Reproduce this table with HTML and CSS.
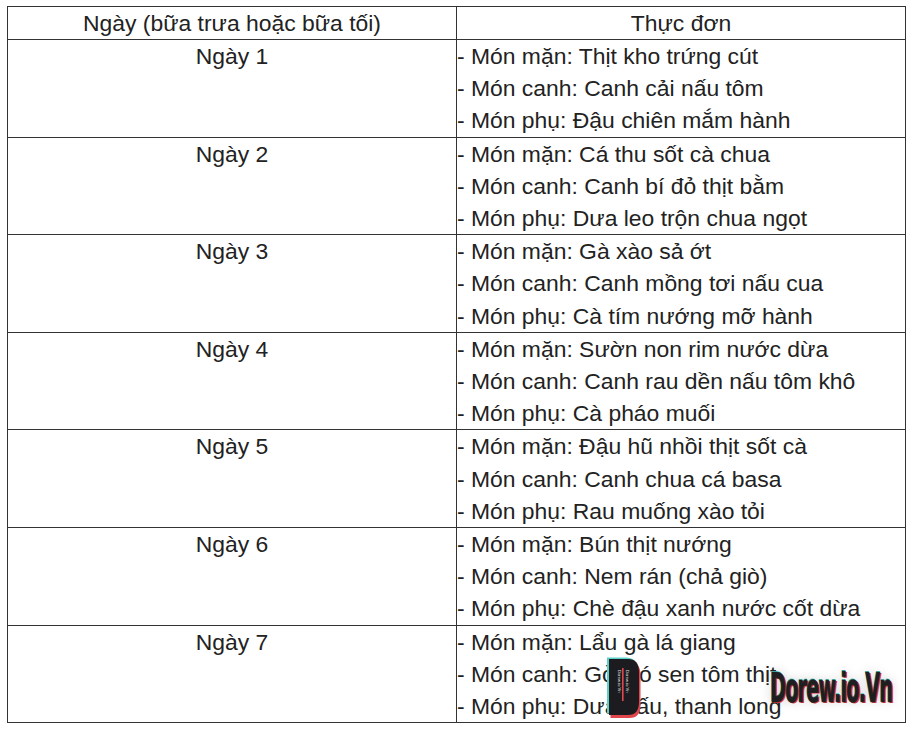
FILE: index.html
```html
<!DOCTYPE html>
<html lang="vi">
<head>
<meta charset="utf-8">
<title>Thực đơn</title>
<link rel="stylesheet" href="styles.css">
</head>
<body>
<div class="wrap">
<table class="menu">
  <thead>
    <tr><th>Ngày (bữa trưa hoặc bữa tối)</th><th>Thực đơn</th></tr>
  </thead>
  <tbody>
    <tr><td class="day">Ngày 1</td><td class="dish">- Món mặn: Thịt kho trứng cút<br>- Món canh: Canh cải nấu tôm<br>- Món phụ: Đậu chiên mắm hành</td></tr>
    <tr><td class="day">Ngày 2</td><td class="dish">- Món mặn: Cá thu sốt cà chua<br>- Món canh: Canh bí đỏ thịt bằm<br>- Món phụ: Dưa leo trộn chua ngọt</td></tr>
    <tr><td class="day">Ngày 3</td><td class="dish">- Món mặn: Gà xào sả ớt<br>- Món canh: Canh mồng tơi nấu cua<br>- Món phụ: Cà tím nướng mỡ hành</td></tr>
    <tr><td class="day">Ngày 4</td><td class="dish">- Món mặn: Sườn non rim nước dừa<br>- Món canh: Canh rau dền nấu tôm khô<br>- Món phụ: Cà pháo muối</td></tr>
    <tr><td class="day">Ngày 5</td><td class="dish">- Món mặn: Đậu hũ nhồi thịt sốt cà<br>- Món canh: Canh chua cá basa<br>- Món phụ: Rau muống xào tỏi</td></tr>
    <tr><td class="day">Ngày 6</td><td class="dish">- Món mặn: Bún thịt nướng<br>- Món canh: Nem rán (chả giò)<br>- Món phụ: Chè đậu xanh nước cốt dừa</td></tr>
    <tr><td class="day">Ngày 7</td><td class="dish">- Món mặn: Lẩu gà lá giang<br>- Món canh: Gỏi gó sen tôm thịt<br>- Món phụ: Dưa hấu, thanh long</td></tr>
  </tbody>
</table>
<div class="logo">
  <svg width="40" height="66" viewBox="0 0 40 66">
    <path d="M5 3 H24 Q35 3 35 16 V46 Q35 59 24 59 H5 Z" fill="#e0474c" transform="translate(1.5 3)"/>
    <path d="M5 3 H24 Q35 3 35 16 V46 Q35 59 24 59 H5 Z" fill="#5ccfc6" transform="translate(-2 -1.5)"/>
    <path d="M5 3 H24 Q35 3 35 16 V46 Q35 59 24 59 H5 Z" fill="#1c1c20"/>
    <rect x="18" y="12" width="1.6" height="33" fill="#e0474c"/>
    <text transform="translate(13.5 14) rotate(90)" font-size="4.2" fill="#e8e8e8" font-family="Liberation Sans, sans-serif">Dorew.io.Vn</text>
    <text transform="translate(22 14) rotate(90)" font-size="4.2" fill="#e8e8e8" font-family="Liberation Sans, sans-serif">Dorew.io.Vn</text>
  </svg>
</div>
<div class="brand">Dorew.io.Vn</div>
</div>
</body>
</html>
```
FILE: styles.css
```css
html, body {
  margin: 0;
  padding: 0;
  background: #ffffff;
}
.wrap {
  position: relative;
  padding: 6px 0 0 7px;
}
.menu {
  width: 899px;
  border-collapse: collapse;
  table-layout: fixed;
  font-family: "Liberation Sans", Arial, sans-serif;
  font-size: 22.9px;
  line-height: 32.2px;
  color: #222222;
}
.menu th, .menu td {
  border: 1px solid #333333;
  padding: 0;
  vertical-align: top;
}
.menu th {
  font-weight: normal;
  text-align: center;
  line-height: 32px;
}
.menu td.day {
  text-align: center;
}
.menu td.dish {
  text-align: left;
}
.logo {
  position: absolute;
  left: 604px;
  top: 656px;
  width: 40px;
  height: 66px;
}
.brand {
  position: absolute;
  left: 770px;
  top: 664px;
  font-family: "DejaVu Sans Condensed", "DejaVu Sans", sans-serif;
  font-weight: bold;
  font-stretch: condensed;
  font-size: 41px;
  line-height: 48px;
  letter-spacing: -1.5px;
  color: #1f1f22;
  -webkit-text-stroke: 0.7px #1f1f22;
  transform: scaleX(0.52);
  transform-origin: left top;
  text-shadow: 3px 1px 0 #d8343c, -1px -1px 0 #4fc9c0, 0 0 16px rgba(0,0,0,0.22);
  white-space: nowrap;
}
```
